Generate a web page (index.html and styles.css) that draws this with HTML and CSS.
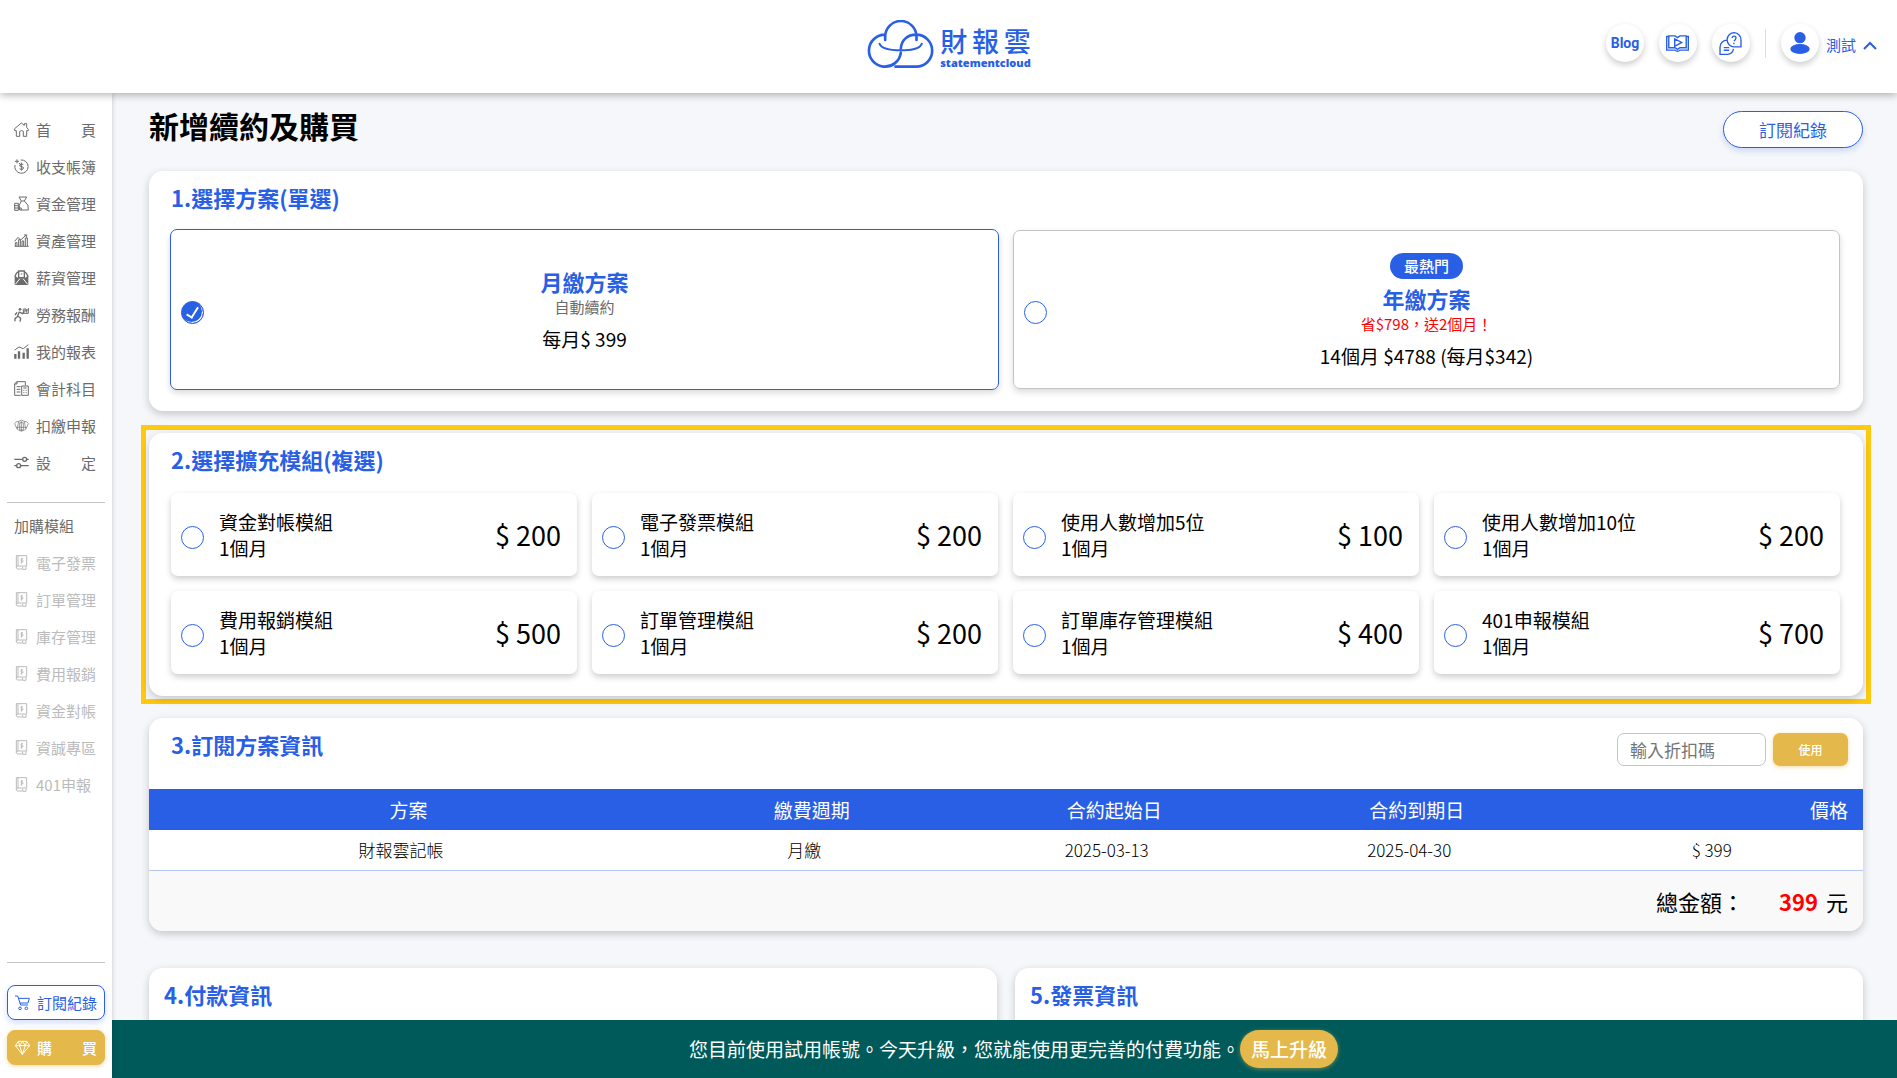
FILE: index.html
```html
<!DOCTYPE html>
<html lang="zh-Hant">
<head>
<meta charset="utf-8">
<title>財報雲 - 新增續約及購買</title>
<link rel="stylesheet" href="styles.css">
</head>
<body>
<svg class="sprite" aria-hidden="true">
  <symbol id="i-home" viewBox="0 0 45 45"><path d="M2 24V20L22 3L31 10V5H38V16L43 22V26H38V43H28V28Q22 23 17 28V43H7V26H2Z"/></symbol>
  <symbol id="i-coin" viewBox="0 0 45 45"><path d="M20 3A20 20 0 1 1 3 18M3 7H15M9 1V13M15 12L20 17M28 17Q22 12 18 17T23 23T27 30Q22 34 17 29M22 11V35"/></symbol>
  <symbol id="i-bag" viewBox="0 0 45 45"><path d="M15 3H38L31 15H22ZM22 15Q12 27 17 42H43Q46 26 31 15M2 22H13V43H2ZM2 29H13M2 36H22V43"/></symbol>
  <symbol id="i-asset" viewBox="0 0 45 45"><path d="M2 25L12 13L20 21L37 6M30 6H38V14M2 40H44M4 39V29H9V39M14 39V20H19V39M24 39V24H29V39M34 39V15H40V39"/></symbol>
  <symbol id="i-salary" viewBox="0 0 45 45"><path class="thick" d="M3 20Q6 8 14 5M42 20Q38 8 31 5M14 3H31V23H14Z"/><path class="fill" d="M2 17L14 25H31L43 17V45H2Z"/><path d="M20 12H25"/><path class="cut" d="M4 43L17 27M41 43L28 27"/></symbol>
  <symbol id="i-labor" viewBox="0 0 45 45"><circle class="fill" cx="18" cy="7" r="4"/><path class="thick" d="M16 14L10 29L3 35V43M16 15L26 20L31 14M12 28L20 34L18 44M9 16L3 24"/><path d="M28 5V19H43V3M33 3V15M38 7V17M31 9H43"/></symbol>
  <symbol id="i-report" viewBox="0 0 45 45"><path class="bar" d="M4 30V44M15 22V44M29 26V44M41 13V44"/><path d="M2 18L15 9L28 14L43 2"/></symbol>
  <symbol id="i-subject" viewBox="0 0 45 45"><path d="M20 43H2V8L9 2H34V13M9 2V9H2M8 17H20M8 25H19M8 33H19M23 15H43V43H23ZM28 21H38M28 28H31M35 28H38M28 35H31M35 35H38"/></symbol>
  <symbol id="i-tax" viewBox="0 0 45 45"><path class="thin" d="M2 17Q6 9 14 10Q22 3 31 10Q39 9 43 17L36 33Q22 45 9 33ZM14 10L10 32M31 10L35 32M17 14H28V36H17ZM22 9V40M7 28H38"/></symbol>
  <symbol id="i-setting" viewBox="0 0 45 45"><path class="thick" d="M1 13H25M39 13H44M1 32H8M20 32H44"/><circle class="thick" cx="32" cy="13" r="6"/><circle class="thick" cx="14" cy="32" r="6"/></symbol>
  <symbol id="i-module" viewBox="0 0 45 45"><path d="M7 2H38V33H12Q7 33 7 38ZM12 2V33M7 38Q8 42 12 42H24M26 35V43H36V34M27 12Q22 9 21 14T26 18T20 23M23 9V26"/></symbol>
  <symbol id="i-cart" viewBox="0 0 45 45"><path d="M0 3H8L17 30H39M10 10H43L39 24H15"/><circle cx="15" cy="40" r="4"/><circle cx="34" cy="40" r="4"/></symbol>
  <symbol id="i-gem" viewBox="0 0 45 45"><path d="M10 4H35L44 17L22 43L1 17ZM1 17H44M10 4L14 17L22 43L31 17L35 4M14 17L22 4L31 17"/></symbol>
</svg>

<header class="topbar">
  <a class="logo" href="#" aria-label="財報雲 statementcloud">
    <svg class="logo-mark" viewBox="80 62 206 150"><path d="M137 122V106A48 48 0 1 0 184 160M137 122V112A46 46 0 0 1 231 112V122M184 147C186 122 204 106 230 106A48 48 0 0 1 230 202H168"/><path class="smile" d="M120 133C127 152 160 153 184 153S240 152 247 133"/></svg>
    <span class="logo-text">
      <span class="logo-name"><span>財</span><span>報</span><span>雲</span></span>
      <span class="logo-sub">statementcloud</span>
    </span>
  </a>
  <nav class="tools">
    <a class="round blog" href="#">Blog</a>
    <a class="round" href="#" aria-label="教學影片"><svg class="tool-icon" viewBox="0 0 66 50"><path d="M8 5H2V44H26Q33 51 40 44H64V5H58M8 3H26L33 8L40 3H58V37H40L33 42L26 37H8ZM25 12V33L45 22Z"/></svg></a>
    <a class="round" href="#" aria-label="線上客服"><svg class="tool-icon" viewBox="0 0 66 68"><path d="M44 2A21 21 0 1 0 44 44H64V24A21 21 0 0 0 44 2M23 24A21 21 0 0 0 2 46V66H24Q38 66 42 50M13 46H29M13 54H29"/><path d="M38 18Q38 12 44 12T49 18T43 27M43 32V36"/></svg></a>
    <span class="split"></span>
    <button class="user" type="button">
      <span class="round"><svg class="avatar" viewBox="0 0 58 66"><circle cx="29" cy="17" r="17"/><ellipse cx="29" cy="51" rx="29" ry="15"/></svg></span>
      <span class="user-name">測試</span>
      <svg class="chevron" viewBox="0 0 14 9"><path d="M1 8L7 2L13 8"/></svg>
    </button>
  </nav>
</header>

<div class="shell">
  <aside class="side">
    <nav class="menu">
      <a href="#"><svg><use href="#i-home"/></svg><span class="spread"><span>首</span><span>頁</span></span></a>
      <a href="#"><svg><use href="#i-coin"/></svg>收支帳簿</a>
      <a href="#"><svg><use href="#i-bag"/></svg>資金管理</a>
      <a href="#"><svg><use href="#i-asset"/></svg>資產管理</a>
      <a href="#"><svg><use href="#i-salary"/></svg>薪資管理</a>
      <a href="#"><svg><use href="#i-labor"/></svg>勞務報酬</a>
      <a href="#"><svg><use href="#i-report"/></svg>我的報表</a>
      <a href="#"><svg><use href="#i-subject"/></svg>會計科目</a>
      <a href="#"><svg><use href="#i-tax"/></svg>扣繳申報</a>
      <a href="#"><svg><use href="#i-setting"/></svg><span class="spread"><span>設</span><span>定</span></span></a>
    </nav>
    <nav class="menu extra">
      <h2>加購模組</h2>
      <a href="#"><svg><use href="#i-module"/></svg>電子發票</a>
      <a href="#"><svg><use href="#i-module"/></svg>訂單管理</a>
      <a href="#"><svg><use href="#i-module"/></svg>庫存管理</a>
      <a href="#"><svg><use href="#i-module"/></svg>費用報銷</a>
      <a href="#"><svg><use href="#i-module"/></svg>資金對帳</a>
      <a href="#"><svg><use href="#i-module"/></svg>資誠專區</a>
      <a href="#"><svg><use href="#i-module"/></svg>401申報</a>
    </nav>
    <div class="side-actions">
      <button class="side-btn outline" type="button"><svg><use href="#i-cart"/></svg>訂閱紀錄</button>
      <button class="side-btn gold" type="button"><svg><use href="#i-gem"/></svg><span class="spread"><span>購</span><span>買</span></span></button>
    </div>
  </aside>

  <div class="page">
    <main class="content">
      <div class="page-head">
        <h1>新增續約及購買</h1>
        <button class="history" type="button">訂閱紀錄</button>
      </div>

      <section class="card">
        <h2>1.選擇方案(單選)</h2>
        <div class="plans">
          <label class="plan selected">
            <input class="pick" type="radio" name="plan" checked>
            <span class="plan-body">
              <span class="plan-name">月繳方案</span>
              <span class="plan-note">自動續約</span>
              <span class="plan-price">每月$ 399</span>
            </span>
          </label>
          <label class="plan">
            <input class="pick" type="radio" name="plan">
            <span class="plan-body">
              <span class="hot">最熱門</span>
              <span class="plan-name">年繳方案</span>
              <span class="plan-note save">省$798，送2個月！</span>
              <span class="plan-price">14個月 $4788 (每月$342)</span>
            </span>
          </label>
        </div>
      </section>

      <div class="highlight">
        <section class="card">
          <h2>2.選擇擴充模組(複選)</h2>
          <div class="modules">
            <label class="module"><input class="pick" type="checkbox"><span class="module-name">資金對帳模組<br>1個月</span><span class="price">$ 200</span></label>
            <label class="module"><input class="pick" type="checkbox"><span class="module-name">電子發票模組<br>1個月</span><span class="price">$ 200</span></label>
            <label class="module"><input class="pick" type="checkbox"><span class="module-name">使用人數增加5位<br>1個月</span><span class="price">$ 100</span></label>
            <label class="module"><input class="pick" type="checkbox"><span class="module-name">使用人數增加10位<br>1個月</span><span class="price">$ 200</span></label>
            <label class="module"><input class="pick" type="checkbox"><span class="module-name">費用報銷模組<br>1個月</span><span class="price">$ 500</span></label>
            <label class="module"><input class="pick" type="checkbox"><span class="module-name">訂單管理模組<br>1個月</span><span class="price">$ 200</span></label>
            <label class="module"><input class="pick" type="checkbox"><span class="module-name">訂單庫存管理模組<br>1個月</span><span class="price">$ 400</span></label>
            <label class="module"><input class="pick" type="checkbox"><span class="module-name">401申報模組<br>1個月</span><span class="price">$ 700</span></label>
          </div>
        </section>
      </div>

      <section class="card summary">
        <div class="summary-head">
          <h2>3.訂閱方案資訊</h2>
          <form class="coupon">
            <input type="text" placeholder="輸入折扣碼" aria-label="輸入折扣碼">
            <button type="button">使用</button>
          </form>
        </div>
        <table>
          <thead>
            <tr><th class="wide">方案</th><th>繳費週期</th><th>合約起始日</th><th>合約到期日</th><th class="end">價格</th></tr>
          </thead>
          <tbody>
            <tr><td>財報雲記帳</td><td>月繳</td><td>2025-03-13</td><td>2025-04-30</td><td>$ 399</td></tr>
          </tbody>
        </table>
        <div class="total"><span class="total-label">總金額：</span><strong>399</strong><span>元</span></div>
      </section>

      <div class="pair">
        <section class="card"><h2>4.付款資訊</h2></section>
        <section class="card"><h2>5.發票資訊</h2></section>
      </div>
    </main>
    <div class="notice">
      <span>您目前使用試用帳號。今天升級，您就能使用更完善的付費功能。</span>
      <button type="button">馬上升級</button>
    </div>
  </div>
</div>
</body>
</html>
```
FILE: styles.css
```css
:root {
  --blue: #285fe5;
  --gold: #e4b84b;
  --line: #c4c4c4;
  --gray: #6b6b6b;
}

* { box-sizing: border-box; }

body {
  margin: 0;
  height: 100vh;
  display: flex;
  flex-direction: column;
  overflow: hidden;
  font-family: "Noto Sans CJK TC", sans-serif;
  font-size: 19px;
  line-height: 26px;
  color: #000;
  background: #f6f7fa;
}

button, input { font: inherit; }
button { cursor: pointer; padding: 0; border: 0; background: none; }
a { color: inherit; text-decoration: none; }
h1, h2 { margin: 0; }

.sprite { position: absolute; width: 0; height: 0; }

/* header */
.topbar {
  position: relative;
  z-index: 2;
  flex: none;
  height: 93px;
  display: grid;
  grid-template-columns: 1fr auto 1fr;
  align-items: center;
  padding: 0 20px;
  background: #fff;
  box-shadow: 0 2px 8px rgba(0, 0, 0, .3);
}

.logo {
  grid-column: 2;
  display: flex;
  align-items: flex-end;
  gap: 5px;
  padding-bottom: 3px;
  color: var(--blue);
}
.logo-mark { width: 69px; height: 50px; fill: none; stroke: currentColor; stroke-width: 8; stroke-linecap: round; }
.logo-mark .smile { stroke-width: 6; }
.logo-text { display: flex; flex-direction: column; }
.logo-name {
  display: flex;
  justify-content: space-between;
  font-size: 27px;
  line-height: 30px;
  font-weight: 500;
}
.logo-sub { font: 800 11px/14px "Open Sans", sans-serif; }

.tools {
  grid-column: 3;
  justify-self: end;
  display: flex;
  align-items: center;
  gap: 15px;
  padding-bottom: 7px;
}
.round {
  width: 38px;
  height: 38px;
  display: flex;
  align-items: center;
  justify-content: center;
  border-radius: 50%;
  background: #fff;
  color: var(--blue);
  box-shadow: 0 3px 6px rgba(0, 0, 0, .2);
}
.blog { font: 700 14px/20px Roboto, sans-serif; }
.tool-icon { width: 23px; height: 23px; fill: none; stroke: currentColor; stroke-width: 4; }
.avatar { width: 20px; height: 22px; fill: currentColor; }
.split { width: 1px; height: 29px; background: #ddd; }
.user { display: flex; align-items: center; gap: 7px; color: var(--blue); font-size: 15px; }
.user-name, .chevron { margin-top: 4px; }
.chevron { width: 14px; height: 9px; fill: none; stroke: currentColor; stroke-width: 2; }

/* frame */
.shell { flex: 1; min-height: 0; display: flex; }

.side {
  position: relative;
  z-index: 1;
  flex: none;
  width: 112px;
  display: flex;
  flex-direction: column;
  padding: 18px 7px 13px;
  background: #fff;
  color: var(--gray);
  font-size: 15px;
  box-shadow: 0 0 5px rgba(0, 0, 0, .2);
}
.menu { display: flex; flex-direction: column; padding: 0 7px; }
.menu a { display: flex; align-items: center; gap: 7px; height: 37px; white-space: nowrap; }
.menu svg, .side-btn svg {
  flex: none;
  width: 15px;
  height: 15px;
  fill: none;
  stroke: currentColor;
  stroke-width: 3;
}
.fill { fill: currentColor; stroke: none; }
.thin { stroke-width: 2; }
.thick { stroke-width: 4; }
.bar { stroke-width: 7; }
.cut { stroke: #fff; }
.spread { width: 60px; display: flex; justify-content: space-between; }
.extra { margin-top: 21px; padding-top: 4px; border-top: 1px solid var(--line); color: #bbb; }
.extra h2 { height: 37px; font-size: 15px; line-height: 37px; font-weight: 400; color: var(--gray); }
.side-actions {
  display: flex;
  flex-direction: column;
  gap: 10px;
  margin-top: auto;
  padding-top: 22px;
  border-top: 1px solid var(--line);
}
.side-btn {
  display: flex;
  align-items: center;
  gap: 7px;
  height: 35px;
  padding: 0 7px;
  border: 1px solid var(--blue);
  border-radius: 8px;
  white-space: nowrap;
}
.outline { color: var(--blue); box-shadow: 0 3px 6px rgba(40, 95, 229, .2); }
.gold { color: #fff; background: var(--gold); border-color: var(--gold); font-weight: 500; box-shadow: 0 1px 4px rgba(228, 184, 75, .5); }

.page { flex: 1; min-width: 0; display: flex; flex-direction: column; }

.content {
  flex: 1;
  min-height: 0;
  overflow-y: auto;
  scrollbar-width: none;
  padding: 15px 34px 60px 37px;
}

.page-head { display: flex; justify-content: space-between; height: 63px; }
h1 { font-size: 30px; line-height: 34px; font-weight: 700; }
.history {
  width: 140px;
  height: 37px;
  margin-top: 3px;
  border: 1px solid var(--blue);
  border-radius: 19px;
  background: #fff;
  color: var(--blue);
  font-size: 17px;
  box-shadow: 0 3px 6px rgba(40, 95, 229, .2);
}

.card {
  padding: 10px 23px 22px 22px;
  border-radius: 14px;
  background: #fff;
  box-shadow: 0 3px 8px rgba(0, 0, 0, .2);
}
.card h2 { font-size: 22px; line-height: 32px; font-weight: 700; color: var(--blue); }

/* round tick control */
.pick {
  appearance: none;
  flex: none;
  width: 23px;
  height: 23px;
  margin: 6px 0 0;
  border: 1px solid var(--blue);
  border-radius: 50%;
  background: #fff;
}
.pick:checked { background: var(--blue); box-shadow: inset -1px -1px 0 #fff; }
.pick:checked::before {
  content: "";
  display: block;
  width: 5px;
  height: 11px;
  margin: 3px 0 0 7px;
  border: solid #fff;
  border-width: 0 2px 2px 0;
  transform: rotate(32deg);
}

.plans { display: grid; grid-template-columns: 1fr 1fr; gap: 15px; padding-top: 17px; }
.plan {
  display: grid;
  grid-template-columns: 23px 1fr 23px;
  align-items: center;
  min-height: 159px;
  padding: 0 10px;
  border: 1px solid var(--line);
  border-radius: 7px;
  box-shadow: 0 3px 6px rgba(0, 0, 0, .15);
}
.plan.selected { margin: -1px; border-color: var(--blue); }
.plan-body { display: flex; flex-direction: column; align-items: center; padding-bottom: 3px; }
.plan-name { font-size: 22px; line-height: 32px; font-weight: 700; color: var(--blue); }
.plan-note { font-size: 15px; line-height: 20px; color: var(--gray); }
.plan-note.save { color: #f00; }
.plan-price { margin-top: 9px; }
.hot {
  padding: 0 14px;
  margin: 5px 0 3px;
  border-radius: 13px;
  background: var(--blue);
  color: #fff;
  font-size: 15px;
  font-weight: 500;
}

.highlight { margin: 14px -8px 14px; padding: 3px; border: 5px solid #ffc90e; }
.modules { display: grid; grid-template-columns: repeat(4, 1fr); gap: 15px; padding-top: 18px; }
.module {
  display: flex;
  align-items: center;
  gap: 15px;
  min-height: 83px;
  padding: 0 16px 0 10px;
  border-radius: 7px;
  box-shadow: 0 3px 6px rgba(0, 0, 0, .2);
}
.module-name { flex: 1; white-space: nowrap; }
.price { font-size: 27px; line-height: 36px; }

/* order summary */
.summary { padding: 0; overflow: hidden; }
.summary-head { display: flex; justify-content: space-between; height: 71px; padding: 10px 15px 0 22px; }
.coupon { display: flex; gap: 7px; padding-top: 5px; }
.coupon input {
  width: 149px;
  height: 33px;
  padding: 0 12px;
  border: 1px solid var(--line);
  border-radius: 7px;
  font-size: 17px;
}
.coupon input::placeholder { color: #757575; }
.coupon button {
  width: 75px;
  height: 33px;
  border-radius: 7px;
  background: var(--gold);
  color: #fff;
  font-size: 12px;
  font-weight: 500;
  box-shadow: 0 1px 4px rgba(228, 184, 75, .5);
}
table { width: 100%; border-collapse: collapse; table-layout: fixed; text-align: center; }
th { height: 41px; padding: 0 0 0 15px; background: var(--blue); color: #fff; font-weight: 400; }
th.wide { width: 29.4%; }
th.end { padding: 0 15px 0 0; text-align: right; }
td { height: 40px; padding: 0; border-bottom: 1px solid #b3c6f5; font-size: 17px; font-weight: 300; }
.total {
  display: flex;
  justify-content: flex-end;
  align-items: center;
  gap: 8px;
  height: 60px;
  padding: 0 15px;
  background: #f9f9f9;
  font-size: 22px;
}
.total strong { color: #f00; }
.total-label { padding-right: 27px; }

.pair { display: grid; grid-template-columns: 1fr 1fr; gap: 18px; margin-top: 37px; }
.pair .card { min-height: 300px; padding: 10px 15px; }

/* trial notice */
.notice {
  flex: none;
  height: 58px;
  display: flex;
  align-items: center;
  justify-content: center;
  padding-left: 18px;
  background: #005a5a;
  color: #fff;
}
.notice button {
  height: 38px;
  padding: 0 11px;
  border-radius: 19px;
  background: var(--gold);
  color: #fff;
  font-weight: 500;
  box-shadow: 0 1px 4px rgba(228, 184, 75, .5);
}
```
